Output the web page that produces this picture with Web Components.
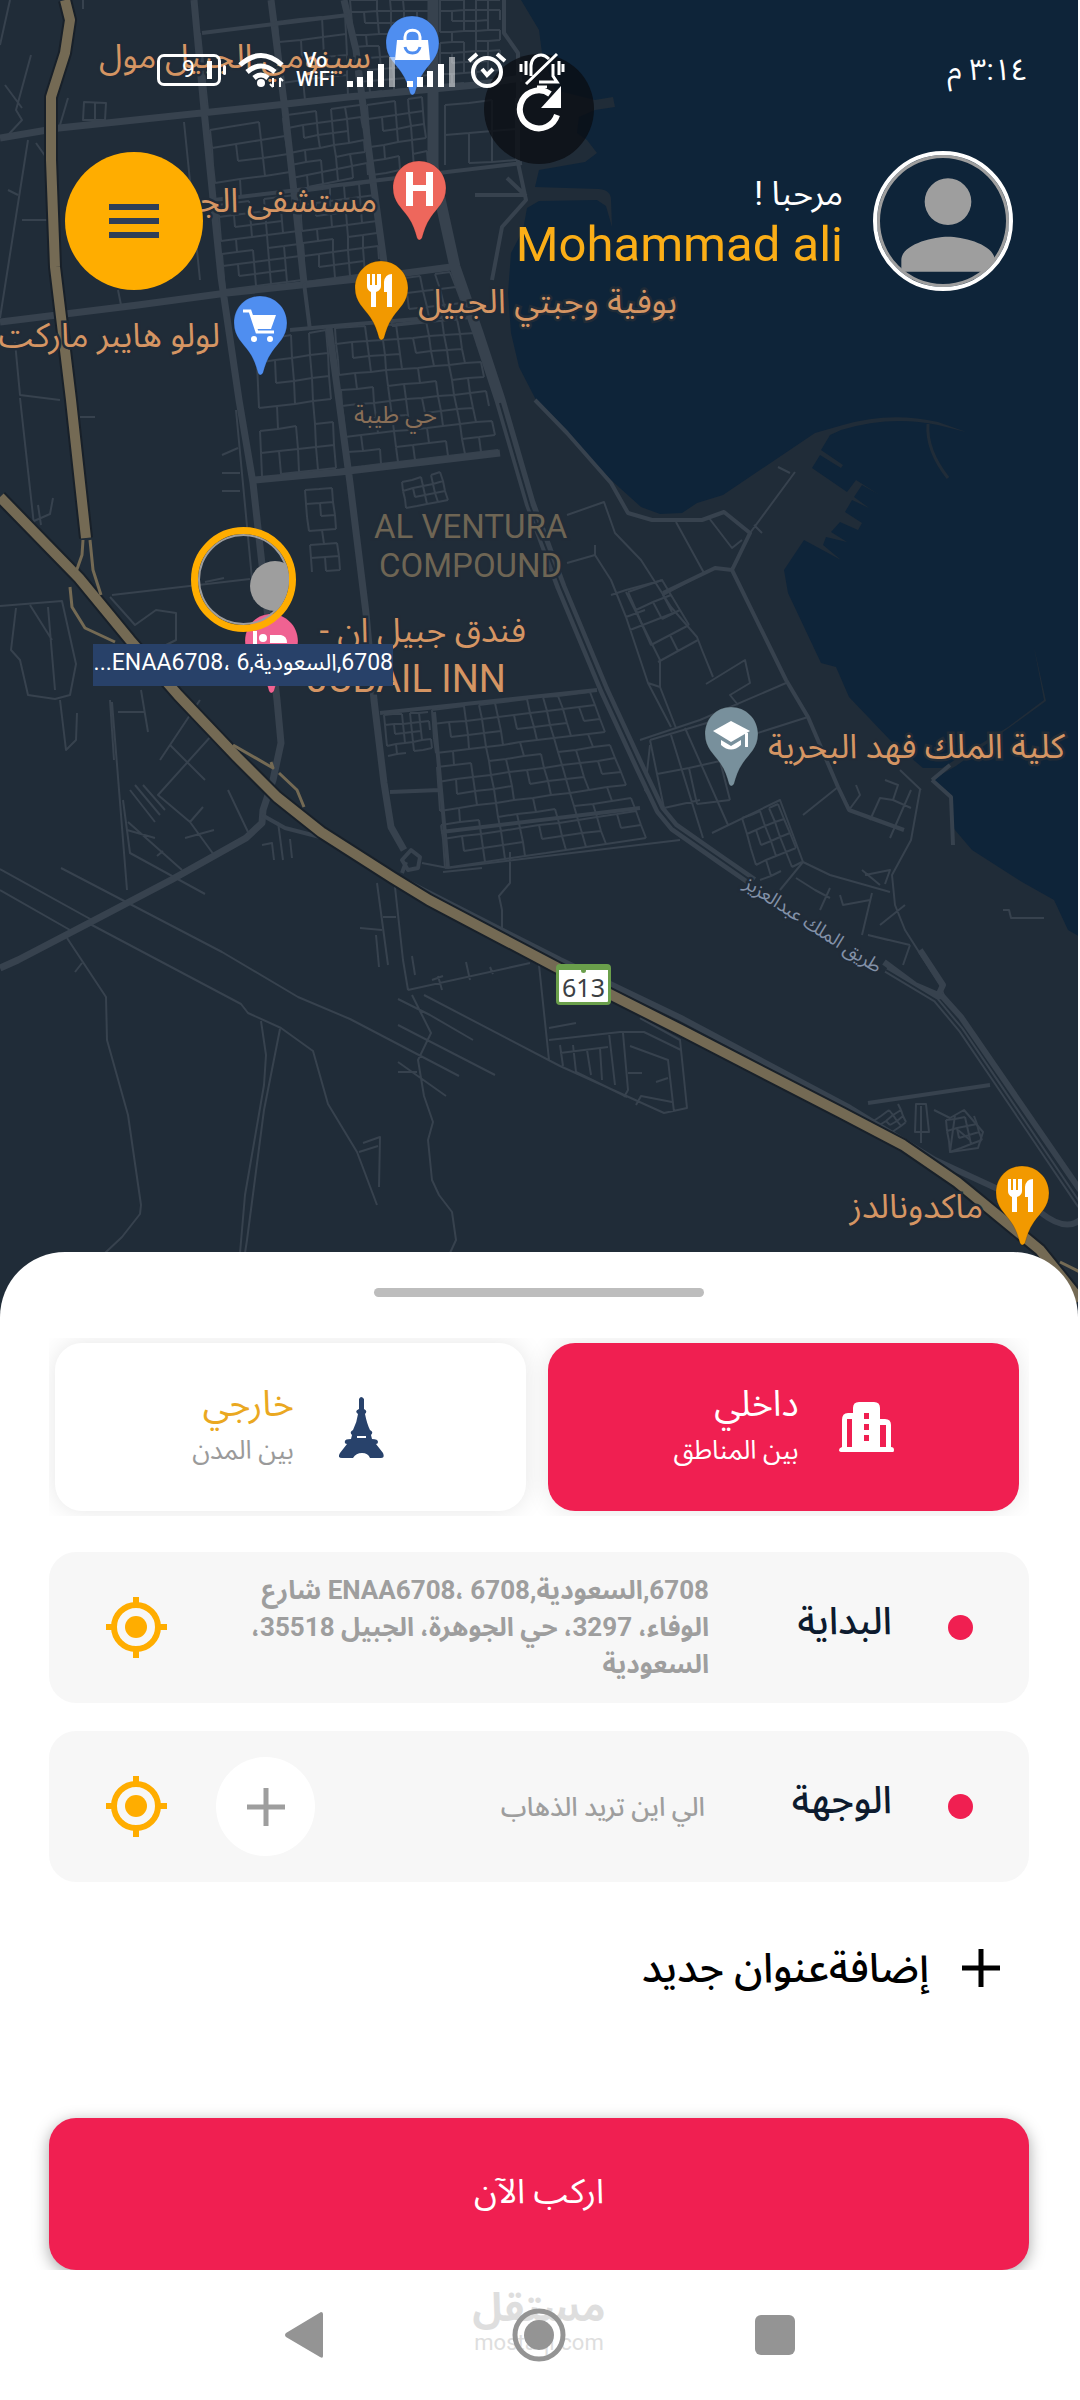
<!DOCTYPE html>
<html lang="ar" dir="rtl">
<head>
<meta charset="utf-8">
<meta name="viewport" content="width=device-width, initial-scale=1">
<title>اركب الآن</title>
<style>
  body {
    margin: 0 2px 0 0;
    font-family: Roboto, "Noto Sans Arabic", "Noto Sans", "DejaVu Sans", sans-serif;
    background: #fff;
    color: #000;
  }
</style>
</head>
<body>
<ride-app></ride-app>

<script>
/* ---------- status bar ---------- */
class StatusBar extends HTMLElement {
  connectedCallback() {
    this.attachShadow({ mode: "open" }).innerHTML = `
      <style>
        :host { display:flex; align-items:center; justify-content:space-between; height:36px; padding:52px 50px 0 157px; color:#fff; }
        time { font-size:30px; line-height:36px; }
        .icons { display:flex; align-items:center; direction:ltr; gap:12px; }
        svg { display:block; fill:none; stroke:#fff; }
        .battery { display:flex; align-items:center; }
        .cell { display:flex; align-items:center; justify-content:flex-end; gap:12px; width:58px; height:26px; border:3px solid #fff; border-radius:7px; font-size:23px; line-height:26px; }
        .cell i { width:5px; height:18px; margin-right:6px; background:#fff; }
        .nub { width:3px; height:10px; margin-left:2px; background:#fff; border-radius:2px; }
        .vo { font-size:20px; line-height:19px; font-weight:500; text-align:center; }
        .vo span { display:block; }
      </style>
      <time>٣:١٤ م</time>
      <div class="icons">
        <div class="battery"><div class="cell">9<i></i></div><div class="nub"></div></div>
        <svg width="46" height="36" viewBox="0 0 46 36" stroke-width="5">
          <path d="M2 13Q23-6 44 13M9 20Q23 8 37 20M16 26Q23 20 30 26"/>
          <circle cx="23" cy="31" r="4" fill="#fff" stroke="none"/>
          <path d="M35 26v9m-3-3l3 3M42 35v-9m3 3l-3-3" stroke-width="2"/>
        </svg>
        <div class="vo"><span>Vo</span><span>WiFi</span></div>
        <svg width="48" height="34" viewBox="0 0 48 34" stroke-width="6">
          <path d="M3 34v-6M13 34V24M23 34V18M34 34V11"/><path d="M45 34V4" opacity=".5"/>
        </svg>
        <svg width="48" height="34" viewBox="0 0 48 34" stroke-width="6">
          <path d="M3 34v-6M13 34V24M23 34V18M34 34V11"/><path d="M45 34V4" opacity=".5"/>
        </svg>
        <svg width="40" height="36" viewBox="0 0 40 36" stroke-width="4">
          <circle cx="20" cy="20" r="14"/><path d="M2 9l8-7M38 9l-8-7M15 17l5 6 6-6"/>
        </svg>
        <svg width="46" height="36" viewBox="0 0 46 36" stroke-width="3">
          <path d="M12 24V14c0-6 4-11 10-11 4 0 6 2 8 4M34 12v12l4 6H20M7 32L38 2M2 12v8M7 9v14M40 9v14M44 12v8M18 35h10"/>
        </svg>
      </div>`;
  }
}
customElements.define("status-bar", StatusBar);

/* ---------- greeting + menu ---------- */
class UserHeader extends HTMLElement {
  connectedCallback() {
    this.attachShadow({ mode: "open" }).innerHTML = `
      <style>
        :host { display:flex; align-items:center; gap:30px; padding:63px 65px 0; }
        .avatar { box-sizing:border-box; width:140px; height:140px; border:4px solid #fff; border-radius:50%; box-shadow:inset 0 0 0 3px #9e9e9e; overflow:hidden; }
        .avatar svg { display:block; width:140px; height:140px; margin-right:-9px; fill:#9e9e9e; }
        .who { flex:1; padding-top:4px; }
        .hello { font-size:34px; line-height:44px; color:#fff; }
        .name { direction:ltr; text-align:right; font-size:49px; line-height:60px; color:#fbae17; }
        button { width:138px; height:138px; padding:0; border:0; border-radius:50%; background:#ffad00; display:grid; place-items:center; cursor:pointer; }
      </style>
      <div class="avatar"><svg viewBox="0 0 24 24"><path d="M12 12a4 4 0 1 0 0-8 4 4 0 0 0 0 8zm0 2c-2.670 0-8 1.340-8 4v2h16v-2c0-2.660-5.330-4-8-4z"/></svg></div>
      <div class="who"><div class="hello"><slot name="hello"></slot></div><div class="name"><slot></slot></div></div>
      <button type="button" aria-label="القائمة">
        <svg width="50" height="34" stroke="#2f3e57" stroke-width="6"><path d="M0 3h50M0 17h50M0 31h50"/></svg>
      </button>`;
  }
}
customElements.define("user-header", UserHeader);

/* ---------- map ---------- */
const PINS = {
  shop: ["#4f8ef0", `<path d="M12 25h31l2 20H10z" fill="#fff"/><path d="M20 27v-5c0-9 15-9 15 0v5" fill="none" stroke="#fff" stroke-width="3"/><path d="M20 32c2 8 13 8 15 0" fill="none" stroke="#4f8ef0" stroke-width="3"/>`],
  hospital: ["#ee675c", `<path d="M14 12h7v13h13V12h7v34h-7V31H21v15h-7z" fill="#fff"/>`],
  food: ["#f29900", `<path d="M13 14h3v11h2V14h3v11h2V14h4v12q0 4-5 6v15h-5V32q-4-2-4-6zM38 14v33h-5V32h-3V22q1-8 8-8z" fill="#fff"/>`],
  cart: ["#4f8ef0", `<path d="M10 16h7l7 21h17" fill="none" stroke="#fff" stroke-width="3"/><path d="M18 20h25l-5 14H23z" fill="#fff"/><circle cx="21" cy="44" r="3" fill="#fff"/><circle cx="37" cy="44" r="3" fill="#fff"/>`],
  hotel: ["#f06292", `<path d="M9 18h4v14h30v7H9z" fill="#fff"/><circle cx="19" cy="25" r="4" fill="#fff"/><path d="M26 22h11q6 1 6 8H26z" fill="#fff"/>`],
  school: ["#78909c", `<path d="M27 15l19 10-19 11L9 25z" fill="#fff"/><path d="M17 34l10 6 10-6v5q-10 9-20 0zM41 27h3v14h-3z" fill="#fff"/>`]
};

class MapPin extends HTMLElement {
  connectedCallback() {
    const [color, glyph] = PINS[this.getAttribute("kind")];
    this.attachShadow({ mode: "open" }).innerHTML = `
      <style>
        :host { position:absolute; left:var(--x); top:var(--y); width:55px; height:81px; }
        svg { display:block; }
      </style>
      <svg width="55" height="81" viewBox="0 0 55 81">
        <path d="M27 1C12 1 1 13 1 28c0 14 9 20 15 29 5 7 7 14 9 21q2 4 5 0c2-7 4-14 9-21 6-9 15-15 15-29C54 13 42 1 27 1z" fill="${color}" stroke="#000" stroke-opacity=".15"/>
        ${glyph}
      </svg>`;
  }
}
customElements.define("map-pin", MapPin);

class MapLabel extends HTMLElement {
  connectedCallback() {
    this.attachShadow({ mode: "open" }).innerHTML = `
      <style>
        :host { position:absolute; left:var(--x); top:var(--y); font-size:34px; line-height:48px; color:#d59563; white-space:nowrap; paint-order:stroke; -webkit-text-stroke:5px #202b37; }
        :host([end]) { left:auto; right:calc(100% - var(--x)); }
        :host([latin]) { font-size:38px; }
        :host([area]) { font-size:33px; line-height:39px; color:#6e6554; text-align:center; }
        :host([small]) { font-size:24px; color:#8a6f57; }
        :host([road]) { font-size:19px; color:#8391a8; rotate:33deg; }
      </style>
      <slot></slot>`;
  }
}
customElements.define("map-label", MapLabel);

// a block of side streets inside four corners, some pieces left out
function block([ax, ay, bx, by, cx, cy, dx, dy], cols, rows) {
  const at = (u, v) => [
    Math.round((ax * (1 - u) + bx * u) * (1 - v) + (dx * (1 - u) + cx * u) * v),
    Math.round((ay * (1 - u) + by * u) * (1 - v) + (dy * (1 - u) + cy * u) * v)
  ].join(" ");
  let d = "";
  for (let r = 0; r <= rows; r++) {
    for (let c = 0; c <= cols; c++) {
      const skip = (r * 7 + c * 5 + r * c * 3) % 8;
      if (c < cols && skip !== 2 && skip !== 6) d += `M${at(c / cols, r / rows)}L${at((c + 1) / cols, r / rows)}`;
      if (r < rows && skip !== 1 && skip !== 5) d += `M${at(c / cols, r / rows)}L${at(c / cols, (r + 1) / rows)}`;
    }
  }
  return d;
}

const BLOCKS = [
  [[277, 22, 345, 14, 348, 95, 283, 103], 3, 4],
  [[350, 0, 430, 0, 430, 86, 358, 94], 6, 8],
  [[440, 0, 500, 0, 500, 80, 440, 85], 5, 8],
  [[210, 130, 283, 118, 292, 190, 216, 200], 3, 4],
  [[287, 115, 360, 105, 368, 175, 293, 190], 5, 6],
  [[367, 105, 422, 97, 428, 165, 372, 175], 4, 5],
  [[445, 105, 516, 98, 516, 160, 445, 165], 3, 2],
  [[218, 205, 295, 195, 302, 280, 225, 290], 5, 7],
  [[300, 192, 374, 182, 380, 272, 305, 282], 5, 7],
  [[390, 280, 450, 272, 468, 318, 392, 326], 4, 3],
  [[335, 328, 472, 318, 498, 450, 348, 468], 9, 9],
  [[256, 340, 326, 330, 336, 468, 262, 476], 4, 6],
  [[305, 490, 332, 488, 340, 570, 312, 572], 2, 6],
  [[402, 482, 440, 472, 448, 500, 406, 508], 4, 3],
  [[432, 710, 590, 692, 646, 838, 445, 868], 10, 11],
  [[384, 715, 428, 712, 432, 748, 388, 756], 5, 4],
  [[628, 592, 662, 580, 698, 640, 658, 662], 2, 4],
  [[742, 818, 778, 804, 802, 862, 760, 880], 4, 4],
  [[650, 740, 710, 722, 730, 800, 664, 808], 2, 2],
  [[872, 1122, 898, 1104, 906, 1122, 890, 1134], 3, 3],
  [[946, 1120, 974, 1116, 982, 1140, 950, 1152], 3, 3]
];

class MapView extends HTMLElement {
  connectedCallback() {
    this.attachShadow({ mode: "open" }).innerHTML = `
      <style>
        :host { display:block; position:relative; overflow:hidden; background:#202c38; }
        svg.roads { position:absolute; inset:0; width:100%; height:100%; }
        .canvas { position:absolute; inset:0; direction:rtl; }
        .over { position:relative; }
        .shield { position:absolute; left:556px; top:964px; box-sizing:border-box; width:55px; height:41px; border:3px solid #6a9f4b; border-top-width:6px; border-radius:4px; background:#fff; color:#3c4043; font:25px/34px "Noto Sans", sans-serif; text-align:center; }
        .shield::before { content:""; position:absolute; left:22px; top:-2px; width:5px; height:5px; border-radius:50%; background:#6a9f4b; }
        .me { position:absolute; left:191px; top:527px; box-sizing:border-box; width:105px; height:105px; border:7px solid #ffad00; border-radius:50%; box-shadow:inset 0 0 0 2px #9e9e9e; overflow:hidden; }
        .me::after { content:""; position:absolute; left:52px; top:27px; width:50px; height:50px; border-radius:50%; background:#9e9e9e; }
        .here { position:absolute; left:93px; top:644px; width:300px; height:42px; background:#284169; color:#fff; font-size:23px; line-height:38px; white-space:nowrap; }
        .refresh { position:absolute; left:calc(50% - 55px); top:54px; width:110px; height:110px; padding:0; border:0; border-radius:50%; background:rgba(10,12,18,.75); display:grid; place-items:center; }
      </style>
      <svg class="roads" viewBox="0 0 1080 1317" preserveAspectRatio="xMinYMin slice" fill="none" stroke="#37424e" stroke-linejoin="round">
        <path fill="#0e2439" stroke="none" d="M521 0L539 30 542 53 555 90 595 100 613 97 615 107 595 110 579 117 577 133 587 140 597 153 585 162 539 170 535 187 599 189Q611 190 611 200L612 227 606 206 597 200 539 201 527 208 523 230 511 253 508 293 511 333 519 367 535 398 556 423 574 440 611 480 641 507 660 514 682 513 697 503 723 495 760 470 815 433 843 425 Q890 411 938 422L966 432 938 425Q890 415 841 430L830 435 821 450 843 465 841 468 820 455 812 468 847 492 856 480 878 494 862 485 854 497 869 508 852 500 845 512 862 523 858 530 840 522 831 532 847 542 826 537 823 545 841 560 804 540 784 570 788 593 821 663 836 667 849 697 890 740 923 768 942 768 1008 727 1044 700 1034 647 1046 701 956 766 932 780 951 797 953 827 955 830 972 850 1022 882 1054 900 1068 930 1080 937V0z"/>
        <path stroke="#202c38" stroke-width="3" d="M928 424Q926 450 948 478"/>
        <path stroke-width="2" d="${BLOCKS.map(([q, c, r]) => block(q, c, r)).join("")}"/>
        <!-- lanes and side streets -->
        <path stroke-width="2" d="M10 0L0 45M83 0V9M31 55L16 110 22 120 8 135M5 85L22 108M28 140L0 318M36 143L48 160M68 98L60 125M84 102L106 103 105 120 83 120zM95 103V120M118 290L121 305M22 220H50M8 190L18 195M200 33L208 110M184 122L200 280M15 342L20 395 60 400M20 398L34 525M34 521L50 514 53 498M38 505L41 525M80 417H95M112 595L250 579M0 606L62 601 76 664 70 695 55 699 28 695 20 660 11 650 16 608M30 605L52 640M48 607L55 690M110 597L135 625 156 610 176 613V640L150 653M112 702L127 890M118 712H145M141 690L148 732M110 700L114 760M60 700L66 750 76 740 77 713M222 455L238 448M222 473H240M222 491H240M236 410L254 600M205 582L224 578M200 700L160 760M212 735L158 795 190 822 203 807M170 745L205 780M130 790L155 822M135 785L160 815M143 785L165 810M127 830L155 838M123 800L130 853 205 894M128 822L182 870M157 856L163 851M190 822L214 855M228 790L248 832M185 838L214 830M262 845L272 843 274 860M278 822L283 860M290 839L292 858"/>
        <path stroke-width="2" d="M0 869L92 920M0 890L70 930M61 868L222 952 298 997 350 1019 459 1076M90 924L241 1004 248 1013 281 1028 313 1051 328 1104 357 1152 377 1205M67 938L106 997 107 1040 128 1115 141 1205 140 1214 122 1237 105 1253M75 972L82 963M261 1021L266 1055 264 1085 245 1195 240 1253M280 1029L264 1110 247 1240 245 1253M363 1143L380 1137 379 1187M359 1152L378 1146M377 883L388 965M395 887L403 960 408 990 M383 917H396M360 928L382 930M376 935L379 967M412 956L415 975M408 990L530 963M398 999L430 1015 473 1040M398 1025L495 1075M412 995L431 1033 418 1060 424 1096 433 1122 428 1140 432 1180 439 1195 452 1212 456 1240 450 1253M398 1062L446 1096M398 1072L417 1072M424 995L560 1066 664 1113 687 1108 680 1040 640 1018M539 965L549 1060M549 1040L620 1032 644 1032 681 1050M560 1045L563 1066M573 1045L576 1072 627 1097M549 1028L576 1023M560 1053L608 1047M609 1033L615 1085M587 1050L591 1075M600 1048L602 1080M623 1033L628 1090 624 1097M630 1046L668 1060 674 1112M636 1105L641 1096 672 1102M628 1073H642M656 1082L668 1078M438 976L442 990M432 980L443 976M466 962L470 980M490 967L493 974M510 852V883L499 896 502 910V928M422 863L448 868 530 858 680 840M443 872L482 868"/>
        <!-- eastern district -->
        <path stroke-width="2" d="M567 515L604 502 615 533 641 560 671 607 697 637 702 650 713 677M567 563L595 555 611 580 626 617 648 683 671 727M595 545V555M626 592L660 660V687L648 683M611 595L626 590 663 580M626 617L645 610M630 630L676 612M704 573L663 595 672 612M676 522L704 573M709 518L732 548 742 540M778 467L790 473M795 472L750 533M754 525L762 533M640 740L700 720 786 683M660 687L676 728M706 684L745 660 750 683 730 695 738 705M808 717L720 745M650 745L645 790 660 808M671 735L703 838M685 728L728 825M700 800L664 808M712 833L780 800 803 862 830 875 890 892M803 815L838 787M838 787L850 810M849 810L860 795 856 785M885 780L898 785 893 800 911 808M893 800L880 798 870 820M911 790L890 838M900 770L921 790M920 790L911 840 892 875 895 905 905 930 940 985 945 998M865 875L890 870 885 884M862 870L880 885M803 862L780 890M796 878L815 890 830 898M830 888L820 910M840 895L843 905 870 900M872 893L862 935M905 905L880 925M868 935L888 940M910 945L868 935M910 945L903 965M934 1110L950 1118 964 1110 983 1132 978 1148 950 1152 955 1115M916 1104H926L929 1132H915zM921 1106V1143M958 1130L970 1140M1003 910H1009L1011 918H1044"/>
        <!-- avenues -->
        <path stroke-width="7" d="M194 0L204 110 221 277 239 400 253 483 277 700 281 743 273 780 263 810 262 823 246 838 171 880 89 923 18 960 0 968M271 0L285 110 304 283M344 0L356 50 370 160 386 277M329 327L350 483 366 613 374 700 384 783 391 827 404 850M0 138L59 128 277 105 348 97 475 85 522 78M0 322L138 305 227 293 376 277 451 267M255 480L340 472 500 453"/>
        <path stroke-width="4" d="M202 33L348 15M214 200L380 180 522 163M304 283L310 330M290 330L345 325 465 315M380 713L597 690M441 832L640 808M390 792L440 790M434 712L448 868M504 0V33L518 53V163L526 200 502 227 492 280M475 195L525 195M507 178L526 196M535 400L567 433 611 483 628 513 652 520 702 520 724 512 750 533 732 570 786 680 808 717 838 787 849 810 904 830M663 593L715 568 732 570M411 850L420 857 418 868 408 870 402 860zM402 873L406 862M932 780L951 797 953 845M950 765L932 780M262 815L285 828 320 837M868 1103L990 1085"/>
        <path stroke-width="11" d="M433 0V167L455 267 478 333 500 400 530 503 561 587 604 690 641 770 660 810 674 827 721 860 753 882"/>
        <path stroke-width="6" d="M886 970L936 1000 961 1030 997 1083 1080 1206M884 962L915 985 943 997 961 1017 1080 1190M935 1002L943 985 920 950M393 875L560 960 681 1018 850 1108 935 1160 1000 1190M1040 1212Q1065 1232 1080 1220"/>
        <path stroke-width="2" stroke="#202c38" d="M500 403L530 506 561 587 604 690 641 770 660 810 674 827 753 882M886 970L936 1000 961 1030 1080 1206"/>
        <!-- motorway -->
        <g stroke="#182029">
          <path stroke-width="14" d="M65 0L70 20 65 53 51 97V160L55 267 71 400 86 538M0 497L79 578 130 640 178 695 237 757 277 797 321 832 393 878 429 900 556 967 681 1030 842 1113 903 1145 957 1182 1040 1250 1080 1300"/>
        </g>
        <g stroke="#746a54">
          <path stroke-width="10" d="M65 0L70 20 65 53 51 97V160L55 267 71 400 86 538M0 497L79 578 130 640 178 695 237 757 277 797 321 832 393 878 429 900 556 967 681 1030 842 1113 903 1145 957 1182 1040 1250 1080 1300"/>
          <path stroke-width="3" d="M83 540L82 555 76 572M90 540L93 570 101 595M70 587L72 607 85 628 115 642M233 745L273 768 271 762M279 773L297 790 304 807M1060 1262L1080 1272"/>
        </g>
      </svg>
      <div class="canvas">
        <map-label end style="--x:371px;--y:32px">سينومي الجبيل مول</map-label>
        <map-label end style="--x:377px;--y:176px">مستشفى الجبيل</map-label>
        <map-label style="--x:418px;--y:277px">بوفية وجبتي الجبيل</map-label>
        <map-label end style="--x:220px;--y:311px">لولو هايبر ماركت</map-label>
        <map-label small style="--x:354px;--y:391px">حي طيبة</map-label>
        <map-label area style="--x:374px;--y:507px">AL VENTURA<br>COMPOUND</map-label>
        <map-label end style="--x:526px;--y:606px">فندق جبيل ان -</map-label>
        <map-label latin style="--x:307px;--y:655px">JUBAIL INN</map-label>
        <map-label style="--x:768px;--y:722px">كلية الملك فهد البحرية</map-label>
        <map-label road style="--x:733px;--y:901px">طريق الملك عبدالعزيز</map-label>
        <map-label end style="--x:983px;--y:1182px">ماكدونالدز</map-label>
        <map-pin kind="shop" style="--x:385px;--y:15px"></map-pin>
        <map-pin kind="hospital" style="--x:392px;--y:160px"></map-pin>
        <map-pin kind="food" style="--x:354px;--y:260px"></map-pin>
        <map-pin kind="cart" style="--x:233px;--y:295px"></map-pin>
        <map-pin kind="hotel" style="--x:244px;--y:613px"></map-pin>
        <map-pin kind="school" style="--x:704px;--y:706px"></map-pin>
        <map-pin kind="food" style="--x:995px;--y:1165px"></map-pin>
        <div class="shield">613</div>
        <div class="me"></div>
        <div class="here">6708,السعودية,ENAA6708، 6...</div>
        <button class="refresh" type="button" aria-label="تحديث">
          <svg width="46" height="48" viewBox="0 0 46 48"><path d="M41 30A19 19 0 1 1 34 9" fill="none" stroke="#fff" stroke-width="6"/><path d="M45 1v22H25z" fill="#fff"/></svg>
        </button>
      </div>
      <div class="over"><slot></slot></div>`;
  }
}
customElements.define("map-view", MapView);

/* ---------- trip type cards ---------- */
class TripCard extends HTMLElement {
  connectedCallback() {
    this.attachShadow({ mode: "open" }).innerHTML = `
      <style>
        :host { display:block; flex:1; }
        button { box-sizing:border-box; display:flex; align-items:center; justify-content:center; gap:40px; width:100%; height:168px; padding:0; border:0; border-radius:27px; background:#fff; box-shadow:0 0 24px rgba(0,0,0,.1); font-family:inherit; text-align:right; cursor:pointer; }
        .icon { display:grid; justify-items:center; width:55px; }
        .text { display:block; padding-bottom:4px; }
        b, small { display:block; font-weight:400; }
        b { font-size:36px; line-height:50px; color:#eaa821; }
        small { font-size:26px; line-height:42px; color:#9a9a9a; }
        :host([active]) button { background:#f01f51; }
        :host([active]) b, :host([active]) small { color:#fff; }
      </style>
      <button type="button">
        <span class="icon"><slot name="icon"></slot></span>
        <span class="text"><b><slot></slot></b><small><slot name="note"></slot></small></span>
      </button>`;
  }
}
customElements.define("trip-card", TripCard);

/* ---------- address row ---------- */
class PlaceRow extends HTMLElement {
  connectedCallback() {
    const label = this.getAttribute("label");
    const value = this.getAttribute("value");
    const field = value
      ? `<textarea id="f" rows="3" readonly>${value}</textarea>`
      : `<input id="f" type="text" placeholder="${this.getAttribute("hint")}">`;
    const add = this.hasAttribute("can-add")
      ? `<button class="add" type="button" aria-label="إضافة"><svg width="38" height="38" stroke="#9e9e9e" stroke-width="5"><path d="M19 0v38M0 19h38"/></svg></button>`
      : "";
    this.attachShadow({ mode: "open" }).innerHTML = `
      <style>
        :host { box-sizing:border-box; display:flex; align-items:center; height:151px; padding:0 56px 0 57px; border-radius:27px; background:#f7f7f7; }
        .dot { width:25px; height:25px; border-radius:50%; background:#f01f51; }
        label { flex:none; width:239px; padding:0 56px 14px 0; box-sizing:border-box; font-size:38px; line-height:48px; font-weight:500; color:#0d1b2e; white-space:nowrap; }
        textarea, input { flex:1; min-width:0; box-sizing:border-box; padding:0; border:0; outline:0; resize:none; overflow:hidden; background:none; font-family:inherit; font-size:26px; line-height:37px; font-weight:700; color:#9e9e9e; }
        textarea { height:111px; }
        input { height:48px; font-weight:500; padding-right:4px; }
        input::placeholder { color:#9e9e9e; opacity:1; }
        button { flex:none; padding:0; border:0; background:none; cursor:pointer; }
        svg { display:block; }
        .add { width:99px; height:99px; margin-left:49px; border-radius:50%; background:#fff; display:grid; place-items:center; }
        .gap { width:80px; }
      </style>
      <span class="dot"></span>
      <label for="f">${label}</label>
      ${field}
      ${add || '<span class="gap"></span>'}
      <button type="button" aria-label="موقعي">
        <svg width="61" height="61" viewBox="0 0 61 61" fill="none" stroke="#ffad00" stroke-width="6"><circle cx="30" cy="30" r="22"/><path d="M30 0v8M30 53v8M0 30h8M53 30h8"/><circle cx="30" cy="30" r="11" fill="#ffad00" stroke="none"/></svg>
      </button>`;
  }
}
customElements.define("place-row", PlaceRow);

/* ---------- bottom sheet ---------- */
class BottomSheet extends HTMLElement {
  connectedCallback() {
    this.attachShadow({ mode: "open" }).innerHTML = `
      <style>
        :host { display:block; position:relative; border-radius:65px 65px 0 0; background:#fff; }
        .handle { width:330px; height:9px; margin:0 auto; border-radius:5px; background:#bdbdbd; }
        .top { padding-top:36px; }
      </style>
      <div class="top"><div class="handle"></div></div>
      <slot></slot>`;
  }
}
customElements.define("bottom-sheet", BottomSheet);

/* ---------- system navigation ---------- */
class NavKeys extends HTMLElement {
  connectedCallback() {
    this.attachShadow({ mode: "open" }).innerHTML = `
      <style>
        :host { position:relative; display:flex; align-items:center; justify-content:space-between; direction:ltr; height:130px; padding:0 283px 0 285px; background:#fff; }
        button { padding:0; border:0; background:none; z-index:1; }
        svg { display:block; fill:#949494; }
        .mark { position:absolute; left:0; right:0; top:12px; text-align:center; color:#dedede; }
        .mark span { display:block; font-size:40px; line-height:52px; font-weight:700; }
        .mark small { display:block; font-size:22px; line-height:18px; }
      </style>
      <div class="mark"><span>مستقل</span><small>mostaql.com</small></div>
      <button type="button" aria-label="رجوع"><svg width="38" height="46"><path d="M36 0q2 0 2 2v42q0 3-3 1L1 25q-2-2 0-4z"/></svg></button>
      <button type="button" aria-label="الرئيسية"><svg width="54" height="54"><circle cx="27" cy="27" r="24" fill="none" stroke="#949494" stroke-width="5"/><circle cx="27" cy="27" r="15"/></svg></button>
      <button type="button" aria-label="التطبيقات"><svg width="40" height="40"><rect width="40" height="40" rx="6"/></svg></button>`;
  }
}
customElements.define("nav-keys", NavKeys);

/* ---------- page ---------- */
class RideApp extends HTMLElement {
  connectedCallback() {
    this.attachShadow({ mode: "open" }).innerHTML = `
      <style>
        :host { display:flex; flex-direction:column; min-height:100vh; }
        map-view { flex:1; min-height:600px; }
        bottom-sheet { margin-top:-65px; }
        .cards { display:flex; gap:22px; margin:41px 49px 0; padding:5px 10px 5px 6px; overflow:hidden; }
        .rows { display:grid; gap:28px; margin:36px 49px 0; }
        .new { display:flex; align-items:center; gap:33px; margin:60px 78px 0 0; padding:0; border:0; background:none; font:500 41px/52px Roboto, "Noto Sans Arabic", "Noto Sans", "DejaVu Sans", sans-serif; color:#000; cursor:pointer; }
        .go { overflow:hidden; margin-top:104px; padding:20px 49px 0; }
        .go button { display:block; width:100%; height:152px; padding:0 0 6px; border:0; border-radius:27px; background:#f01f51; box-shadow:0 4px 16px rgba(0,0,0,.35); font:34px/48px Roboto, "Noto Sans Arabic", "Noto Sans", "DejaVu Sans", sans-serif; color:#fff; cursor:pointer; }
        svg { display:block; }
      </style>
      <map-view>
        <status-bar></status-bar>
        <user-header><span slot="hello">مرحبا !</span>Mohammad ali</user-header>
      </map-view>
      <bottom-sheet>
        <div class="cards">
          <trip-card active>
            <svg slot="icon" width="55" height="50" viewBox="0 0 55 50" fill="#fff" fill-rule="evenodd"><path d="M14 11V6q0-6 6-6h15q6 0 6 6v11h5q6 0 6 6v22q3 0 3 3t-3 2H3q-3 0-3-2t3-3V18q0-7 6-7zM8 17v28h5V17zM41 23v22h6V23zM25 11v6h5v-6zM25 22v6h5v-6zM25 33v6h5v-6z"/></svg>
            داخلي<span slot="note">بين المناطق</span>
          </trip-card>
          <trip-card>
            <svg slot="icon" width="45" height="61" viewBox="0 0 45 61" fill="#28426b"><path d="M20 2q2-4 5 0v10q4 2 1 5 2 10 5 16 4 2 1 5l1 4q6 0 6 3 0 2-2 2l7 9q2 5-2 5H31q-2-5-8-5-6 0-9 5H3q-5 0-2-5l7-9q-3 0-2-3 0-2 6-2l1-4q-3-3 1-5 4-8 5-16-4-3 1-5zM18 39v2h9v-2z" fill-rule="evenodd"/></svg>
            خارجي<span slot="note">بين المدن</span>
          </trip-card>
        </div>
        <div class="rows">
          <place-row label="البداية" value="6708,السعودية,ENAA6708، 6708 شارع الوفاء، 3297، حي الجوهرة، الجبيل 35518، السعودية"></place-row>
          <place-row label="الوجهة" hint="الي اين تريد الذهاب" can-add></place-row>
        </div>
        <button class="new" type="button">
          <svg width="38" height="38" stroke="#000" stroke-width="5"><path d="M19 0v38M0 19h38"/></svg>
          إضافةعنوان جديد
        </button>
        <div class="go"><button type="button">اركب الآن</button></div>
        <nav-keys></nav-keys>
      </bottom-sheet>`;
  }
}
customElements.define("ride-app", RideApp);
</script>
</body>
</html>
